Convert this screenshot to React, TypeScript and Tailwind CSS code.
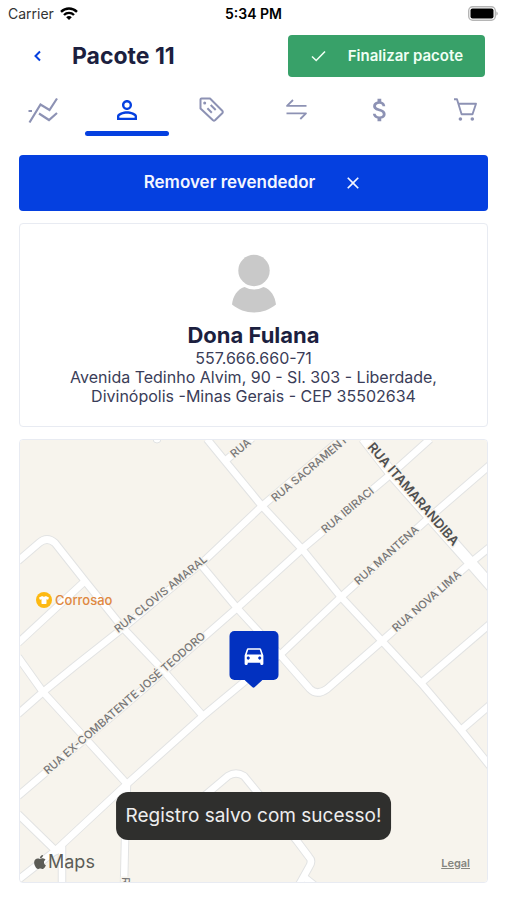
import React from "react";
import { MdAttachMoney, MdClose, MdDirectionsCar, MdPersonOutline } from "react-icons/md";
import { FaApple, FaTshirt } from "react-icons/fa";

const fontStack = "font-['Inter','Liberation_Sans',sans-serif]";

function StatusBar() {
  return (
    <div className="grid h-[27px] grid-cols-3 items-center px-2 text-sm text-black">
      <div className="flex items-center gap-1.5 text-[#333]">
        <span>Carrier</span>
        <svg viewBox="0 0 18 13" className="h-[13px] w-[18px]" fill="none" stroke="#000" strokeWidth="2.4" aria-hidden="true">
          <path d="M1 4.8C5.6.3 12.400.3 17 4.800" />
          <path d="M4 8C6.800 5.200 11.200 5.200 14 8" />
          <path d="M6.200 10.200C7.800 8.700 10.200 8.700 11.800 10.200L9 13Z" fill="#000" stroke="none" />
        </svg>
      </div>
      <span className="text-center font-semibold">5:34 PM</span>
      <svg viewBox="0 0 31 15" className="h-[15px] w-[31px] justify-self-end" aria-hidden="true">
        <rect x="0.700" y="0.700" width="26.600" height="13.600" rx="4" fill="#fff" stroke="#b5b5b5" strokeWidth="1.400" />
        <rect x="2.500" y="2.500" width="23" height="10" rx="2" fill="#000" />
        <path d="M28.500 5.200Q30.800 7.500 28.500 9.800Z" fill="#999" />
      </svg>
    </div>
  );
}

function Header() {
  return (
    <header className="flex items-center justify-between pt-2 pr-[22px] pl-7">
      <div className="flex items-center gap-6">
        <button type="button" aria-label="Voltar" className="flex size-5 items-center justify-center text-[#0540e0]">
          <svg viewBox="0 0 12 12" className="size-3" fill="none" stroke="currentColor" strokeWidth="2">
            <path d="M8 1.500 3.500 6 8 10.500" />
          </svg>
        </button>
        <h1 className="text-[23px] leading-7 font-bold text-[#1c1f3f]">Pacote 11</h1>
      </div>
      <button type="button" className="flex h-[42px] items-center gap-5 rounded bg-[#38a169] px-[22px] text-[15px] font-semibold text-[#f0fff4]">
        <svg viewBox="0 0 18 18" className="size-[18px]" fill="none" stroke="currentColor" strokeWidth="1.600" aria-hidden="true">
          <path d="M2 9.500 6.200 13.500 15 4.500" />
        </svg>
        Finalizar pacote
      </button>
    </header>
  );
}

const strokeIcon = "size-9";

const tabs = [
  {
    label: "Resumo",
    active: false,
    icon: (
      <svg viewBox="0 0 36 36" className={strokeIcon} fill="none" stroke="currentColor" strokeWidth="2.200">
        <path d="M5.500 30.500 16.500 12.500 25.500 18 33 6.500M15 21.500 25 28 33 21M4.500 19H8" />
      </svg>
    ),
  },
  { label: "Revendedor", active: true, icon: <MdPersonOutline className="size-[30px]" /> },
  {
    label: "Etiquetas",
    active: false,
    icon: (
      <svg viewBox="0 0 36 36" className={strokeIcon} fill="none" stroke="currentColor" strokeWidth="2" strokeLinejoin="round">
        <path d="M8.500 6.500H17L29.500 19Q30.200 20 29.500 21L22 28.300Q21 29 20 28.300L7.500 16.500V7.500Q7.500 6.500 8.500 6.500Z" />
        <path d="M14.400 16.300 18.800 20.700M17.700 13 22.700 18" />
        <circle cx="11.700" cy="11" r="1.500" fill="currentColor" stroke="none" />
      </svg>
    ),
  },
  {
    label: "Trocas",
    active: false,
    icon: (
      <svg viewBox="0 0 36 36" className={strokeIcon} fill="none" stroke="currentColor" strokeWidth="1.800" strokeLinejoin="round">
        <path d="M15 8 9 13.800H28.500M8.500 21.300H28L22.300 27" />
      </svg>
    ),
  },
  { label: "Pagamentos", active: false, icon: <MdAttachMoney className="size-[30px]" /> },
  {
    label: "Carrinho",
    active: false,
    icon: (
      <svg viewBox="0 0 36 36" className={strokeIcon} fill="none" stroke="currentColor" strokeWidth="1.900" strokeLinejoin="round">
        <path d="M7 7.300H10L14.600 22.300H25.500L29 11.700H11.300" />
        <circle cx="13.400" cy="27" r="1.800" fill="currentColor" stroke="none" />
        <circle cx="25.300" cy="27" r="1.800" fill="currentColor" stroke="none" />
      </svg>
    ),
  },
];

function Tabs() {
  return (
    <nav className="mt-[15px] grid grid-cols-6">
      {tabs.map((tab) => (
        <button
          key={tab.label}
          type="button"
          aria-label={tab.label}
          className={tab.active ? "flex flex-col items-center text-[#0540e0]" : "flex flex-col items-center text-[#8d92b4]"}
        >
          <span className="flex h-[39px] items-start justify-center">
            <span className="flex size-9 items-center justify-center">{tab.icon}</span>
          </span>
          <span className={tab.active ? "h-[5px] w-full rounded-full bg-[#0540e0]" : "h-[5px] w-full"} />
        </button>
      ))}
    </nav>
  );
}

function ResellerCard() {
  return (
    <section className="flex flex-col items-center rounded border border-[#e8ebf2] px-10 pt-[30px] pb-5 text-center text-[#3a3d58]">
      <svg viewBox="0 0 46 60" className="h-[60px] w-[46px]" fill="#c9c9c9" aria-hidden="true">
        <circle cx="23" cy="16.500" r="15.700" />
        <path d="M13.500 33Q23 38 32.500 33C40 35.500 44 42 45 50.500C39 55.500 31 58.500 23 58.500S7 55.500 1 50.500C2 42 6 35.500 13.500 33Z" />
      </svg>
      <h2 className="mt-[7px] text-[22px] leading-7 font-bold text-[#1c1f3f]">Dona Fulana</h2>
      <p className="text-base leading-[19px]">557.666.660-71</p>
      <p className="text-base leading-[19px]">Avenida Tedinho Alvim, 90 - Sl. 303 - Liberdade, Divinópolis -Minas Gerais - CEP 35502634</p>
    </section>
  );
}

const streets = [
  "M207 438 225 460 262 505 302 548 341 596 382 640 421 682 461 729 490 765",
  "M225 460 252 437",
  "M18 713 43 691 75 665 123 627 205 559 262 505 341 438",
  "M18 795 45 772 125 704 205 635 237 607 302 548 391 473 430 438",
  "M18 879 55 850 127 783 203 715 250 676 282 652 341 596 431 515 490 464",
  "M202 565 237 607 282 656 310 688Q317 695 327 688L382 640 469 563 490 546",
  "M421 682 490 623",
  "M461 729 490 704",
  "M18 560 39 542Q47 535 55 542L85 580 123 627 162 668 203 715",
  "M85 580 18 642",
  "M18 656 43 691 85 737 127 783 125 840 124 884",
  "M18 813 56 850 62 846 62 884",
  "M190 807 228 775Q236 770 244 775L297 840 309 856Q313 860 309 866L299 884",
  "M304 876 314 884",
];

const avenue = "M364 437 392 473 431 517 471 562 492 586";

const streetLabels = [
  { text: "RUA CLOVIS AMARAL", x: 163, y: 596, angle: -39 },
  { text: "RUA SACRAMENTO", x: 315, y: 468, angle: -40 },
  { text: "RUA", x: 243, y: 450, angle: -40 },
  { text: "RUA IBIRACI", x: 350, y: 512, angle: -40 },
  { text: "RUA MANTENA", x: 389, y: 557, angle: -42 },
  { text: "RUA NOVA LIMA", x: 429, y: 603, angle: -41 },
  { text: "RUA EX-COMBATENTE JOSÉ TEODORO", x: 127, y: 705, angle: -41 },
];

function StreetMap() {
  return (
    <svg viewBox="20 439 467 442" preserveAspectRatio="xMidYMid slice" className="block w-full" role="img" aria-label="Mapa">
      <rect x="0" y="400" width="520" height="500" fill="#f7f4ed" />
      <g fill="none" strokeLinejoin="round">
        <g stroke="#e2e3e3">
          {streets.map((d) => (
            <path key={d} d={d} strokeWidth="8.500" />
          ))}
          <path d={avenue} strokeWidth="12.500" />
          <circle cx="157" cy="438" r="4" fill="#fff" />
        </g>
        <g stroke="#fff">
          {streets.map((d) => (
            <path key={d} d={d} strokeWidth="6.500" />
          ))}
          <path d={avenue} strokeWidth="10.500" />
        </g>
      </g>
      <g className="text-[11px] font-medium" fill="#777" stroke="#f7f4ed" strokeWidth="3" strokeLinejoin="round" paintOrder="stroke" textAnchor="middle">
        {streetLabels.map((label) => (
          <text key={label.text} transform={`translate(${label.x} ${label.y}) rotate(${label.angle})`}>
            {label.text}
          </text>
        ))}
        <text transform="translate(122 876) rotate(92)" textAnchor="start">
          R
        </text>
        <text className="text-[13px] font-semibold" fill="#505050" transform="translate(410 496) rotate(49)">
          RUA ITAMARANDIBA
        </text>
      </g>
    </svg>
  );
}

function MapCard() {
  return (
    <section className="relative overflow-hidden rounded border border-[#e8ebf2]">
      <StreetMap />
      <div className="absolute top-[152px] left-4 flex items-center gap-[3px] text-[13px] leading-4 font-medium text-[#df8840]">
        <span className="flex size-4 items-center justify-center rounded-full bg-[#fdb912] text-white">
          <FaTshirt className="size-2.5" />
        </span>
        Corrosao
      </div>
      <div className="absolute top-[191px] left-1/2 flex -translate-x-1/2 flex-col items-center">
        <div className="flex size-[49px] items-center justify-center rounded-[5px] bg-[#0231c0] text-white">
          <MdDirectionsCar className="size-[25px]" />
        </div>
        <svg viewBox="0 0 18 8" className="h-2 w-[18px]" fill="#0231c0" aria-hidden="true">
          <path d="M0 0H18L10 7.300Q9 8 8 7.300Z" />
        </svg>
      </div>
      <div className="absolute bottom-2 left-3 flex items-center text-[18px] leading-6 text-[#5c5c56]">
        <FaApple className="size-4" />
        Maps
      </div>
      <a href="#legal" className="absolute right-[17px] bottom-[11px] text-[11px] leading-4 font-semibold text-[#85857f] underline">
        Legal
      </a>
    </section>
  );
}

export default function App() {
  return (
    <div className={`relative min-h-screen bg-white ${fontStack}`}>
      <StatusBar />
      <Header />
      <Tabs />
      <main className="flex flex-col gap-3 px-[19px] pt-[19px] pb-[18px]">
        <button type="button" className="flex h-14 items-center justify-center gap-7 rounded bg-[#0540e0] text-[17px] font-semibold text-[#f4f6ff]">
          Remover revendedor
          <MdClose className="size-5" aria-hidden="true" />
        </button>
        <ResellerCard />
        <MapCard />
      </main>
      <div role="status" className="absolute bottom-[61px] left-1/2 -translate-x-1/2 rounded-xl bg-[#2f2f2d] px-2.5 py-3 text-[19px] leading-6 whitespace-nowrap text-[#ededed]">
        Registro salvo com sucesso!
      </div>
    </div>
  );
}
